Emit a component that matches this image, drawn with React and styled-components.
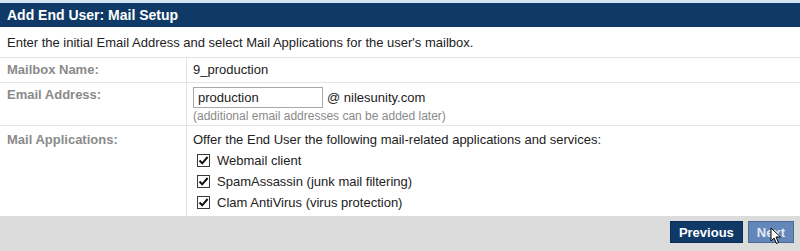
import React from "react";
import styled, { createGlobalStyle } from "styled-components";

const GlobalStyle = createGlobalStyle`
  body {
    margin: 0;
    background: #fff;
    font-family: "Liberation Sans", Arial, sans-serif;
    font-size: 13px;
    color: #222;
  }
`;

const Panel = styled.div`
  width: 800px;
  height: 251px;
  display: flex;
  flex-direction: column;
  border-top: 3px solid #d4e4f0;
  box-sizing: border-box;
`;

const Header = styled.div`
  background: #0f3a67;
  color: #fff;
  font-weight: bold;
  font-size: 14px;
  height: 24px;
  line-height: 24px;
  padding-left: 7px;
  flex-shrink: 0;
`;

const Intro = styled.div`
  height: 30px;
  flex-shrink: 0;
  display: flex;
  align-items: center;
  padding-left: 7px;
  border-bottom: 1px solid #e4e4e4;
`;

const Row = styled.div`
  display: grid;
  grid-template-columns: 187px 1fr;
  flex-shrink: 0;
  border-bottom: ${(p) => (p.last ? "none" : "1px solid #e4e4e4")};
  height: ${(p) => p.h}px;
`;

const Label = styled.div`
  color: #8a8a8a;
  font-weight: bold;
  padding: ${(p) => p.top || 4}px 7px;
  border-right: 1px solid #e4e4e4;
`;

const Value = styled.div`
  padding: ${(p) => p.top || 4}px 6px;
  display: flex;
  flex-direction: column;
`;

const EmailLine = styled.div`
  display: flex;
  align-items: center;
  gap: 4px;
`;

const Input = styled.input`
  width: 130px;
  height: 21px;
  box-sizing: border-box;
  border: 1px solid #a9a9a9;
  padding: 0 4px;
  margin: 0;
  font: inherit;
  color: #222;
`;

const Hint = styled.div`
  color: #8a8a8a;
  font-size: 12px;
  margin-top: 1px;
`;

const CheckList = styled.div`
  display: flex;
  flex-direction: column;
  gap: 1px;
  margin-top: 3px;
`;

const Check = styled.label`
  display: flex;
  align-items: center;
  gap: 7px;
  margin-left: 4px;
  height: 20px;
`;

const Box = styled.span`
  width: 13px;
  height: 13px;
  box-sizing: border-box;
  border: 1px solid #3a3a3a;
  background: #fff;
  display: flex;
  align-items: center;
  justify-content: center;
`;

const Footer = styled.div`
  flex: 1;
  background: #dcdcdc;
  display: flex;
  justify-content: flex-end;
  align-items: flex-start;
  gap: 5px;
  padding: 5px 6px 0 0;
`;

const Button = styled.button`
  position: relative;
  height: 22px;
  padding: 0 8px;
  border: 1px solid ${(p) => (p.hover ? "#4a6a94" : "#0a2c52")};
  background: ${(p) => (p.hover ? "#6287b8" : "#0f3a67")};
  color: ${(p) => (p.hover ? "#e2eaf4" : "#fff")};
  font-family: "Liberation Sans", Arial, sans-serif;
  font-weight: bold;
  font-size: 13px;
`;

const Cursor = styled.svg`
  position: absolute;
  left: 21px;
  top: 5px;
`;

const Tick = () => (
  <svg width="11" height="11" viewBox="0 0 11 11">
    <path d="M1.5 5.5 L4.2 8.3 L9.6 2" fill="none" stroke="#111" strokeWidth="2" />
  </svg>
);

const apps = [
  "Webmail client",
  "SpamAssassin (junk mail filtering)",
  "Clam AntiVirus (virus protection)",
];

export default function App() {
  return (
    <>
      <GlobalStyle />
      <Panel>
        <Header>Add End User: Mail Setup</Header>
        <Intro>
          Enter the initial Email Address and select Mail Applications for the user's mailbox.
        </Intro>
        <Row h={24}>
          <Label>Mailbox Name:</Label>
          <Value>9_production</Value>
        </Row>
        <Row h={42}>
          <Label>Email Address:</Label>
          <Value>
            <EmailLine>
              <Input defaultValue="production" />
              <span>@ nilesunity.com</span>
            </EmailLine>
            <Hint>(additional email addresses can be added later)</Hint>
          </Value>
        </Row>
        <Row h={90} last>
          <Label top={6}>Mail Applications:</Label>
          <Value top={6}>
            <div>Offer the End User the following mail-related applications and services:</div>
            <CheckList>
              {apps.map((a) => (
                <Check key={a}>
                  <Box>
                    <Tick />
                  </Box>
                  {a}
                </Check>
              ))}
            </CheckList>
          </Value>
        </Row>
        <Footer>
          <Button>Previous</Button>
          <Button hover>
            Next
            <Cursor width="12" height="18" viewBox="0 0 12 18">
              <path d="M1 1 L1 14 L4 11 L6.5 16.5 L8.5 15.5 L6 10 L10.5 10 Z" fill="#fff" stroke="#000" strokeWidth="1" />
            </Cursor>
          </Button>
        </Footer>
      </Panel>
    </>
  );
}
